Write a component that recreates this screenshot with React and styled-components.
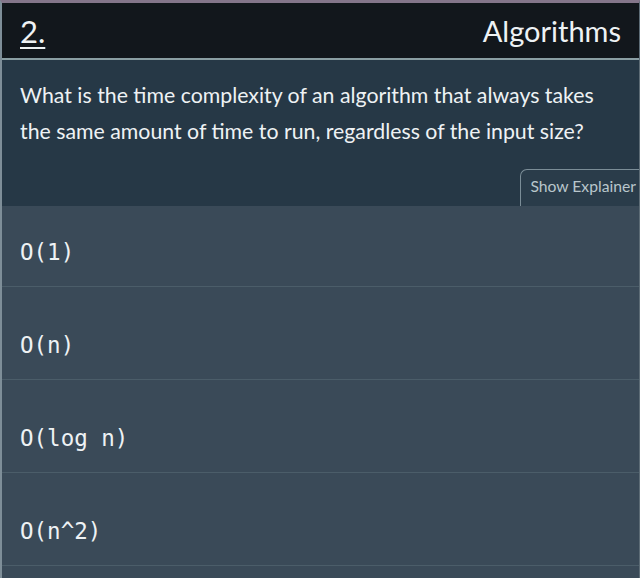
import React from "react";
import styled, { createGlobalStyle } from "styled-components";

const Global = createGlobalStyle`
  html, body { margin: 0; padding: 0; background: #3a4a58; }
  body { width: 640px; height: 578px; overflow: hidden; }
`;

const Card = styled.div`
  width: 640px;
  height: 578px;
  box-sizing: border-box;
  border-top: 3px solid #84768a;
  border-left: 2px solid #7e8e98;
  border-right: 1px solid #5d6c76;
  background: #3a4a58;
  display: flex;
  flex-direction: column;
  overflow: hidden;
`;

const Header = styled.header`
  height: 55px;
  background: #12171c;
  border-bottom: 2px solid #8a9ea3;
  display: flex;
  align-items: center;
  justify-content: space-between;
  padding: 0 18px 0 18px;
  font-family: Lato, "Open Sans", sans-serif;
  color: #eef2f4;
  font-size: 29px;
`;

const Number = styled.span`
  font-size: 31px;
  text-decoration: underline;
  text-underline-offset: 4px;
  text-decoration-thickness: 2px;
`;

const Topic = styled.span`
  font-weight: 400;
`;

const QuestionBox = styled.section`
  background: #263846;
  display: flex;
  flex-direction: column;
  padding-top: 17px;
`;

const QuestionText = styled.p`
  margin: 0;
  max-width: 590px;
  padding: 0 0 0 18px;
  font-family: Lato, "Open Sans", sans-serif;
  font-size: 21.3px;
  line-height: 36px;
  color: #eef2f4;
`;

const ExplainerButton = styled.button`
  align-self: flex-end;
  margin-top: 20px;
  height: 37px;
  padding: 0 3px 4px 9px;
  background: #2a3c4a;
  border: 1px solid #7b8d97;
  border-right: none;
  border-bottom: none;
  border-radius: 7px 0 0 0;
  font-family: Lato, "Open Sans", sans-serif;
  font-size: 15.7px;
  color: #b9c6cc;
  cursor: pointer;
`;

const Options = styled.ul`
  list-style: none;
  margin: 0;
  padding: 0;
`;

const Option = styled.li`
  padding: ${(p) => (p.$first ? "35px" : "47px")} 20px 23px 18px;
  border-bottom: 1px solid #4b5d69;
  font-family: "DejaVu Sans Mono", monospace;
  font-size: 22.5px;
  line-height: 22px;
  color: #eef2f4;
`;

const options = ["O(1)", "O(n)", "O(log n)", "O(n^2)"];

export default function App() {
  return (
    <>
      <Global />
      <Card>
        <Header>
          <Number>2.</Number>
          <Topic>Algorithms</Topic>
        </Header>
        <QuestionBox>
          <QuestionText>
            What is the time complexity of an algorithm that always takes the
            same amount of time to run, regardless of the input size?
          </QuestionText>
          <ExplainerButton>Show Explainer</ExplainerButton>
        </QuestionBox>
        <Options>
          {options.map((o, i) => (
            <Option key={o} $first={i === 0}>
              {o}
            </Option>
          ))}
        </Options>
      </Card>
    </>
  );
}
